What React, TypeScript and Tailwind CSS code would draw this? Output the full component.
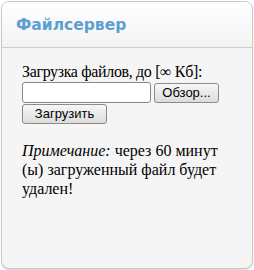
import React from 'react';

export default function App() {
  return (
    <div className="w-[254px] h-[270px] bg-white p-px">
      <div className="h-[268px] w-[252px] rounded-[8px] border border-[#c8c8c0] bg-[#f5f5f5] overflow-hidden shadow-[0_1px_1px_rgba(0,0,0,0.15)]">
        {/* Header */}
        <div className="h-[46px] border-b border-[#cfcfc8] bg-gradient-to-b from-white to-[#f3f3f3] pl-[14px] pt-[14px]">
          <h2 className="text-[15.5px] font-bold text-[#5ba0d0] leading-[18px]" style={{ fontFamily: '"DejaVu Sans", Verdana, sans-serif' }}>
            Файлсервер
          </h2>
        </div>

        {/* Body */}
        <div className="pl-[20px] pr-[12px] pt-[15px] text-[16px] leading-[18px] text-black" style={{ fontFamily: '"Liberation Serif", "Times New Roman", serif' }}>
          <div className="tracking-[-0.35px]">Загрузка файлов, до [∞ Кб]:</div>
          <div className="flex items-center gap-[3px] mt-[1px]">
            <input type="text" className="w-[129px] h-[21px] rounded-[3px] border border-[#8a8580] bg-white" />
            <button className="w-[65px] h-[20px] rounded-[3px] border border-[#8f8a85] bg-gradient-to-b from-[#f7f7f7] to-[#dcdcdc] text-[13px] leading-[16px] text-black" style={{ fontFamily: '"Liberation Sans", Arial, sans-serif' }}>
              Обзор...
            </button>
          </div>
          <button className="mt-[1px] w-[85px] h-[20px] rounded-[3px] border border-[#8f8a85] bg-gradient-to-b from-[#f7f7f7] to-[#dcdcdc] text-[13px] leading-[16px] text-black" style={{ fontFamily: '"Liberation Sans", Arial, sans-serif' }}>
            Загрузить
          </button>

          <p className="mt-[17px] leading-[19px]">
            <em>Примечание:</em> через 60 минут (ы) загруженный файл будет удален!
          </p>
        </div>
      </div>
    </div>
  );
}
